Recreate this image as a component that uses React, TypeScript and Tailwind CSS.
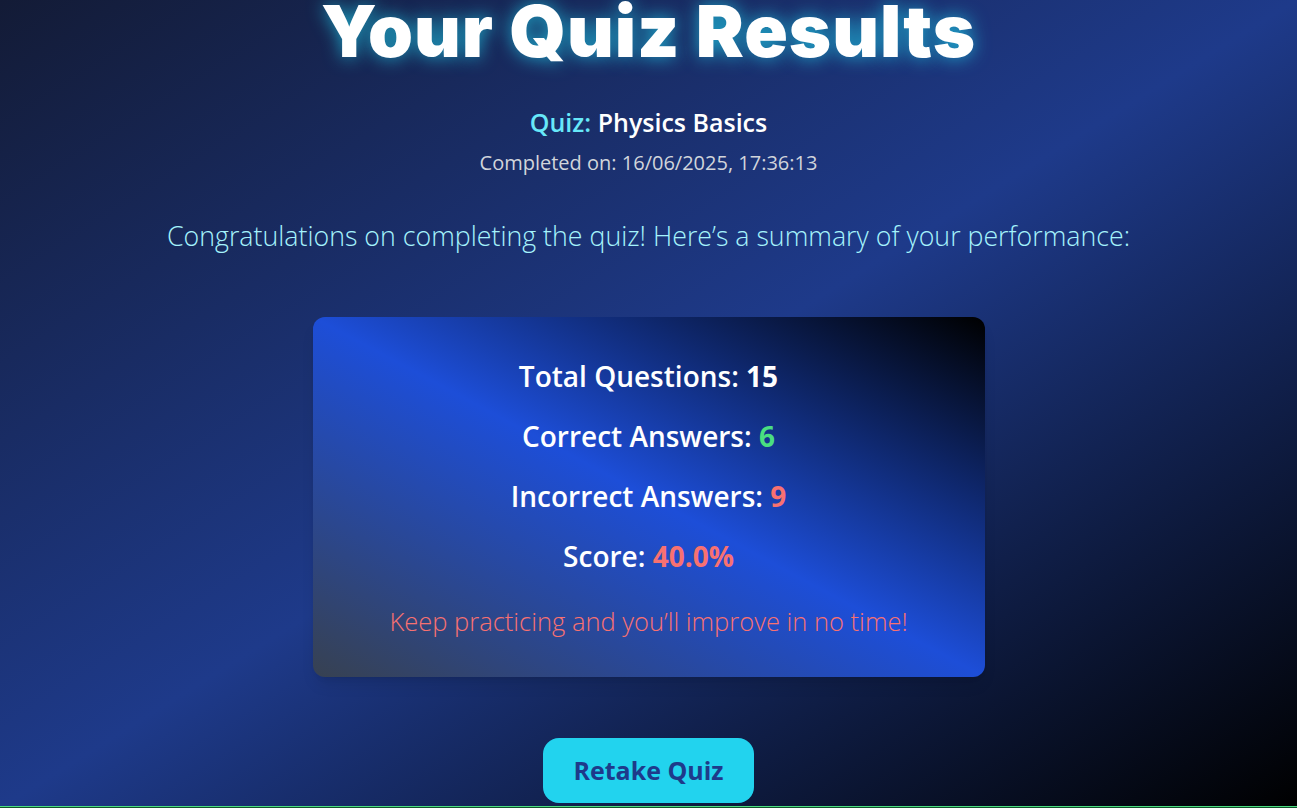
export default function App() {
  return (
    <div className="h-[808px] overflow-hidden flex flex-col bg-linear-to-br/srgb from-[#131b36] via-[#1e3a8a] to-black font-['Open_Sans','Noto_Sans',sans-serif]">
      <main className="flex-1 flex flex-col items-center text-center">
        <h1 className="mt-[-5px] h-[72px] text-[72px] leading-none font-black text-white tracking-[1px] font-['Inter',sans-serif] [text-shadow:0_0_18px_rgba(34,211,238,0.75)]">
          Your Quiz Results
        </h1>

        <p className="mt-[39px] text-[25px] leading-8 font-semibold text-white">
          <span className="text-[#67e8f9]">Quiz:</span> Physics Basics
        </p>
        <p className="mt-[11px] text-[20px] leading-7 text-[#d1d5db]">Completed on: 16/06/2025, 17:36:13</p>

        <p className="mt-[41px] text-[26.75px] leading-9 font-light text-[#a5f3fc]">
          Congratulations on completing the quiz! Here&rsquo;s a summary of your performance:
        </p>

        <div className="mt-[63px] w-[672px] h-[360px] rounded-xl shadow-lg bg-linear-to-tr/srgb from-[#374151] via-[#1d4ed8] to-black flex flex-col items-center pt-[39px]">
          <div className="flex flex-col gap-5 text-[28px] leading-10 font-semibold text-white">
            <p>Total Questions: <span className="font-bold">15</span></p>
            <p>Correct Answers: <span className="font-bold text-[#4ade80]">6</span></p>
            <p>Incorrect Answers: <span className="font-bold text-[#f87171]">9</span></p>
            <p>Score: <span className="font-bold text-[#f87171]">40.0%</span></p>
          </div>
          <p className="mt-[27px] text-[25.5px] leading-9 font-light text-[#f87171]">
            Keep practicing and you&rsquo;ll improve in no time!
          </p>
        </div>

        <button className="mt-[61px] h-[65px] px-[30px] rounded-2xl bg-[#22d3ee] text-[#1e3a8a] text-[25px] font-bold">
          Retake Quiz
        </button>
      </main>
      <div className="h-px bg-[#4ade80]" />
      <div className="h-px bg-[#14532d]" />
    </div>
  );
}
